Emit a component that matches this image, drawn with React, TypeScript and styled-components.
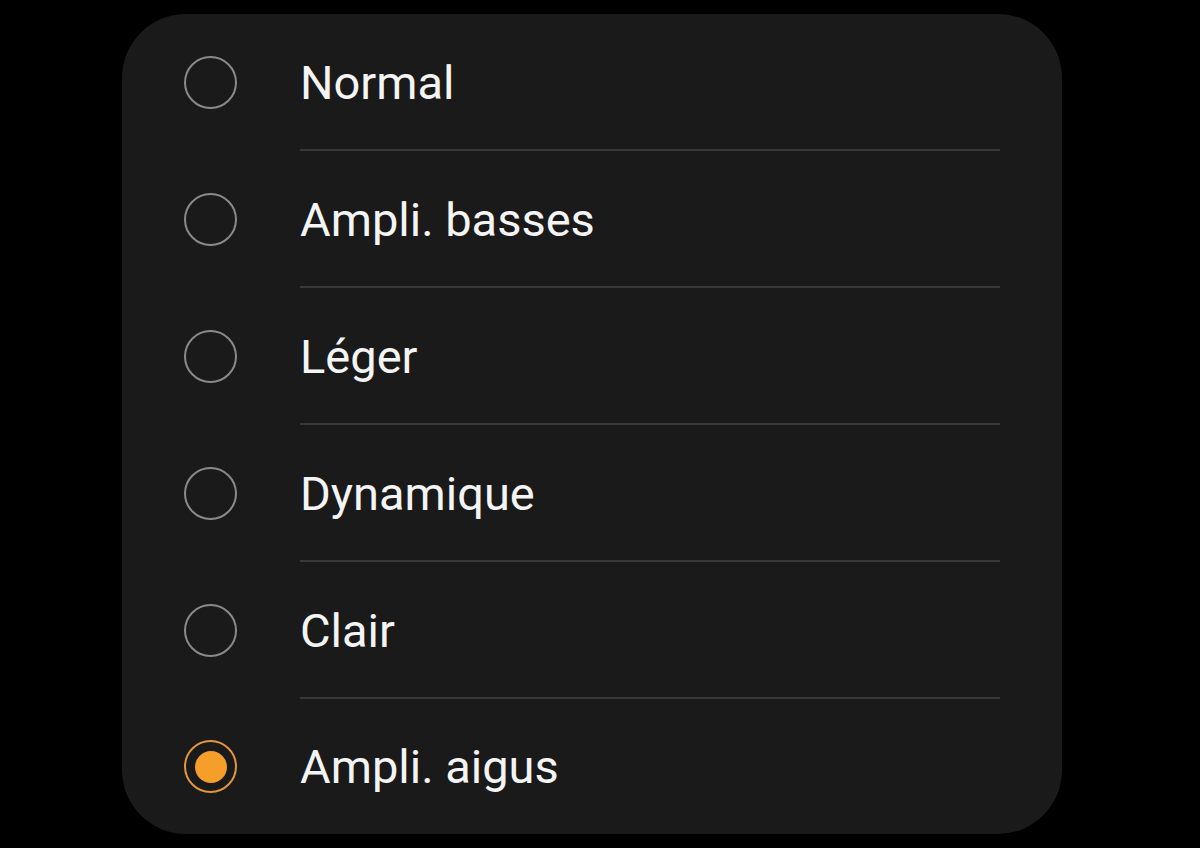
import React from 'react';
import styled, { createGlobalStyle } from 'styled-components';

const options = ['Normal', 'Ampli. basses', 'Léger', 'Dynamique', 'Clair', 'Ampli. aigus'];
const selected = 'Ampli. aigus';

function App() {
  return (
    <>
      <GlobalStyle />
      <Page>
        <Card>
          {options.map((label, i) => (
            <Row key={label}>
              <RadioCell>
                <Radio $checked={label === selected} />
              </RadioCell>
              <Content $last={i === options.length - 1}>
                <Label>{label}</Label>
              </Content>
            </Row>
          ))}
        </Card>
      </Page>
    </>
  );
}

export default App;

const GlobalStyle = createGlobalStyle`
  html, body {
    margin: 0;
    padding: 0;
    background: #000;
  }
`;

const Page = styled.div`
  width: 1200px;
  height: 848px;
  background: #000;
  padding: 14px 0 0 122px;
  box-sizing: border-box;
  overflow: hidden;
`;

const Card = styled.div`
  width: 940px;
  height: 820px;
  background: #1a1a1a;
  border-radius: 64px;
  display: flex;
  flex-direction: column;
  overflow: hidden;
`;

const Row = styled.div`
  display: flex;
  align-items: stretch;
  height: 137px;
  flex-shrink: 0;

  &:last-child {
    height: 135px;
  }
`;

const RadioCell = styled.div`
  width: 178px;
  padding-left: 62px;
  box-sizing: border-box;
  display: flex;
  align-items: center;
`;

const Radio = styled.span<{ $checked: boolean }>`
  width: 53px;
  height: 53px;
  box-sizing: border-box;
  border-radius: 50%;
  border: 2.5px solid ${(p) => (p.$checked ? '#e4963a' : '#8a8a8a')};
  display: flex;
  align-items: center;
  justify-content: center;

  &::after {
    content: '';
    display: ${(p) => (p.$checked ? 'block' : 'none')};
    width: 32px;
    height: 32px;
    border-radius: 50%;
    background: #f59f2a;
  }
`;

const Content = styled.div<{ $last: boolean }>`
  flex: 1;
  margin-right: 62px;
  display: flex;
  align-items: center;
  border-bottom: 2px solid ${(p) => (p.$last ? 'transparent' : '#383838')};
`;

const Label = styled.span`
  font-family: Roboto, 'Noto Sans', sans-serif;
  font-size: 47px;
  color: #f4f4f4;
  padding-top: 2px;
`;
